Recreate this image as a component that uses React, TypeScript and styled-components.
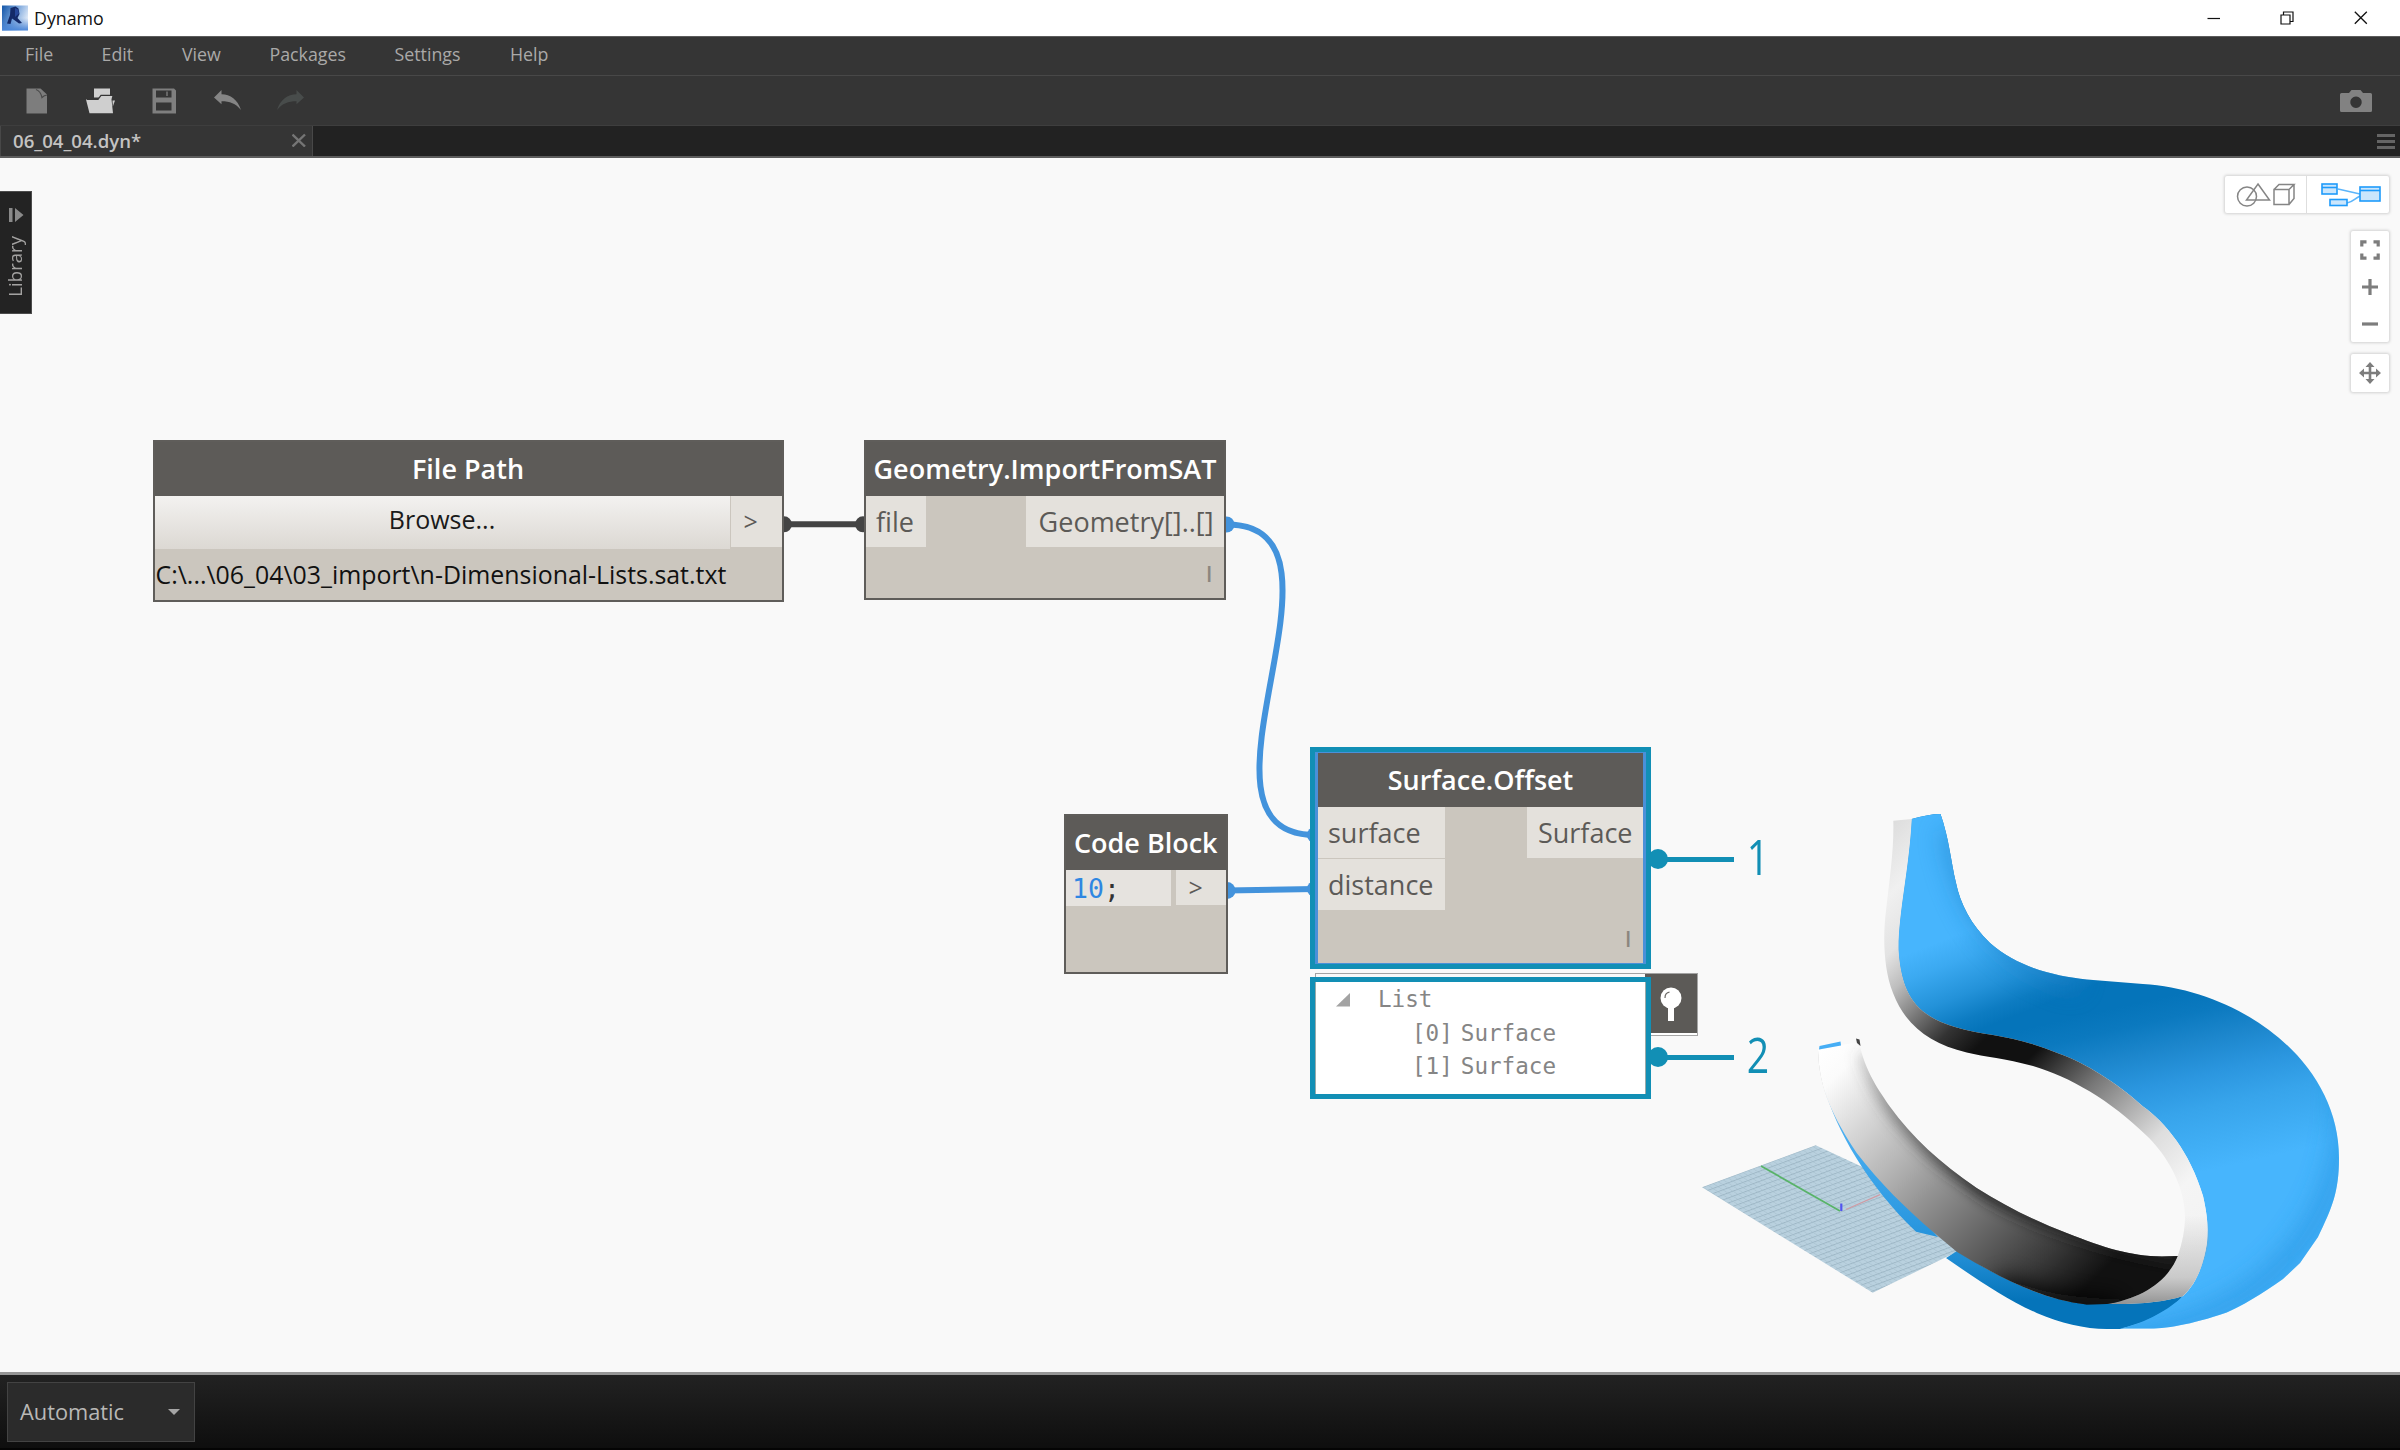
import React from "react";
import styled, { createGlobalStyle, css } from "styled-components";

const GlobalStyle = createGlobalStyle`
  html, body { margin: 0; padding: 0; }
  body { width: 2400px; height: 1450px; overflow: hidden; background: #f9f9f9; }
  * { box-sizing: border-box; }
`;

const teal = "#128fb5";
const wireBlue = "#4393dc";
const CANVAS_TOP = 158;

/* ---------- Window chrome ---------- */

const Window = styled.div`
  display: flex;
  flex-direction: column;
  width: 2400px;
  height: 1450px;
  overflow: hidden;
  font-family: "Open Sans", "Noto Sans", sans-serif;
`;

const TitleBar = styled.header`
  display: flex;
  align-items: center;
  height: 36px;
  flex: none;
  padding: 0 32px 0 2px;
  background: #fff;
  color: #111;
`;

const TitleText = styled.span`
  flex: 1;
  padding-left: 5px;
  font-size: 17.8px;
  line-height: 36px;
`;

const WindowButtons = styled.div`
  display: flex;
  align-items: center;
  gap: 60px;
  svg { display: block; }
`;

const MenuBar = styled.nav`
  display: flex;
  flex: none;
  height: 39px;
  padding-left: 25px;
  background: #353535;
  border-top: 1px solid #5c5c5c;
`;

const MenuItem = styled.span<{ $w: number }>`
  width: ${(p) => p.$w}px;
  font-size: 17.8px;
  line-height: 35px;
  color: #aaa9a8;
`;

const ToolBar = styled.div`
  display: flex;
  flex: none;
  align-items: center;
  justify-content: space-between;
  height: 50px;
  padding: 1px 27px 0 26px;
  background: #353535;
  border-top: 1px solid #484848;
`;

const ToolGroup = styled.div`
  display: flex;
  align-items: center;
  svg { display: block; }
`;

const ToolSlot = styled.div<{ $w: number }>`
  width: ${(p) => p.$w}px;
`;

const TabStrip = styled.div`
  display: flex;
  flex: none;
  justify-content: space-between;
  height: 33px;
  padding-right: 5px;
  background: #222;
  border-top: 1px solid #3e3e3e;
  border-bottom: 2px solid #5d5d5d;
`;

const Tab = styled.div`
  display: flex;
  align-items: center;
  justify-content: space-between;
  width: 313px;
  padding: 0 6px 2px 12px;
  background: #353535;
  border-left: 1px solid #484848;
  border-right: 1px solid #484848;
  color: #c4c3c2;
  font-size: 18.6px;
  font-weight: 600;
`;

const TabMenu = styled.div`
  display: flex;
  flex-direction: column;
  justify-content: center;
  gap: 3px;
  i { display: block; width: 18px; height: 3px; background: #656565; }
`;

const Footer = styled.footer`
  display: flex;
  flex: none;
  height: 78px;
  padding: 7px 7px;
  background: linear-gradient(#222, #0e0e0e);
  border-top: 3px solid #969696;
  border-bottom: 2px solid #040404;
`;

const RunMode = styled.div`
  display: flex;
  align-items: center;
  justify-content: space-between;
  width: 188px;
  height: 60px;
  padding: 0 14px 1px 12px;
  border: 1px solid #434343;
  background: #2b2b2b;
  color: #b9b8b6;
  font-size: 21.8px;
`;

const Caret = styled.span`
  border: 6.5px solid transparent;
  border-top: 6.5px solid #a5a5a5;
  border-bottom: 0;
`;

/* ---------- Workspace ---------- */

const Workspace = styled.main`
  position: relative;
  flex: 1;
  overflow: hidden;
  background: #f9f9f9;
`;

const Scene = styled.svg`
  position: absolute;
  inset: 0;
  display: block;
`;

const Placed = styled.div<{ $x: number; $y: number; $w: number; $h: number }>`
  position: absolute;
  left: ${(p) => p.$x}px;
  top: ${(p) => p.$y - CANVAS_TOP}px;
  width: ${(p) => p.$w}px;
  height: ${(p) => p.$h}px;
`;

const LibraryTab = styled(Placed)`
  display: flex;
  flex-direction: column;
  align-items: center;
  padding: 16px 0 0 1px;
  background: #232323;
  border: solid #4c4c4c;
  border-width: 1px 1px 1px 0;
  svg { display: block; flex: none; }
`;

const LibraryLabel = styled.span`
  margin: 14px 2px 0 0;
  writing-mode: vertical-rl;
  transform: rotate(180deg);
  color: #a3a2a1;
  font-size: 18.6px;
  line-height: 26px;
`;

const NodeBox = styled(Placed)`
  display: flex;
  flex-direction: column;
  background: #cbc6be;
  border: 2px solid #5f5d5a;
  color: #5c5a57;
  font-size: 27px;
`;

const NodeTitle = styled.div<{ $h: number }>`
  flex: none;
  height: ${(p) => p.$h}px;
  line-height: ${(p) => p.$h - 1}px;
  background: #5d5b58;
  color: #fff;
  text-align: center;
  font-weight: 600;
  white-space: nowrap;
`;

const PortArea = styled.div`
  display: flex;
  justify-content: space-between;
  align-items: flex-start;
`;

const PortColumn = styled.div`
  display: flex;
  flex-direction: column;
  gap: 1px;
`;

const Port = styled.div<{ $w: number; $h?: number; $side?: "in" | "out" | "mid" }>`
  width: ${(p) => p.$w}px;
  height: ${(p) => p.$h ?? 51}px;
  line-height: ${(p) => p.$h ?? 51}px;
  background: #e4e1dc;
  ${(p) =>
    p.$side === "out"
      ? css`text-align: right; padding-right: 10.5px;`
      : p.$side === "mid"
      ? css`padding-left: 13px; border-left: 1px solid #cbc6be; font-size: 25px;`
      : css`padding-left: 10px;`}
`;

const Lacing = styled.div`
  margin-top: auto;
  padding: 0 12px 10px 0;
  text-align: right;
  font-size: 21px;
  font-weight: 600;
  line-height: 28px;
  color: #8b867f;
`;

const BrowseButton = styled.div`
  flex: 1;
  height: 53px;
  line-height: 47px;
  text-align: center;
  color: #1a1a1a;
  font-size: 25px;
  background: linear-gradient(#f3f2f0, #dcd8d3);
`;

const PathText = styled.div`
  padding-left: 1px;
  line-height: 51px;
  font-size: 24.9px;
  color: #111;
  white-space: nowrap;
`;

const CodeField = styled.div`
  width: 107px;
  height: 36px;
  padding-left: 6px;
  border-right: 2px solid #cbc6be;
  background: #e6e3df;
  color: #333;
  font: 26.5px/37px "DejaVu Sans Mono", "Liberation Mono", monospace;
  b { font-weight: 400; color: #2f87e2; }
`;

const Frame = styled(Placed)`
  border: 5px solid ${teal};
`;

const SelectedInner = styled.div`
  height: 100%;
  display: flex;
  flex-direction: column;
  border: solid #4a90d9;
  border-width: 1px 3px 1px 3px;
  background: #cbc6be;
  color: #5c5a57;
  font-size: 27px;
`;

const PreviewBox = styled(Placed)`
  display: flex;
  justify-content: flex-end;
  align-items: flex-start;
  border-top: 1px solid #a3a3a3;
  border-left: 1px solid #a3a3a3;
`;

const PinButton = styled.div`
  display: flex;
  justify-content: center;
  align-items: flex-start;
  width: 53px;
  height: 62px;
  padding-top: 13px;
  background: #5c5a57;
  border: solid #a6a6a6;
  border-width: 0 1px 1px 0;
  box-shadow: inset 0 -2px 0 #fff;
`;

const Tree = styled.div`
  height: 100%;
  padding: 1px 0 0 66px;
  background: #fff;
  box-shadow: inset 1px 0 0 #9aa, inset -1px 0 0 #9aa;
  color: #858585;
  font: 22.6px/33.5px "DejaVu Sans Mono", "Liberation Mono", monospace;
`;

const TreeRow = styled.div<{ $child?: boolean }>`
  display: flex;
  gap: 8px;
  height: 33.5px;
  padding-left: ${(p) => (p.$child ? 31 : 0)}px;
  margin-left: ${(p) => (p.$child ? 0 : -45)}px;
  align-items: center;
`;

const Expander = styled.svg`
  display: block;
  margin-right: 10px;
`;

const Callout = styled(Placed)`
  display: flex;
  align-items: center;
  color: ${teal};
`;

const CalloutDot = styled.i`
  width: 20px;
  height: 20px;
  border-radius: 50%;
  background: ${teal};
`;

const CalloutLine = styled.i`
  width: 67px;
  height: 5px;
  margin-left: -1px;
  background: ${teal};
`;

const CalloutNumber = styled.span`
  margin: -6px 0 0 10px;
  width: 28px;
  font: 400 49px/50px "Open Sans", sans-serif;
  transform: scaleX(0.8);
`;

/* ---------- View controls ---------- */

const ViewControls = styled.div`
  position: absolute;
  top: 18px;
  right: 11px;
  display: flex;
  flex-direction: column;
  align-items: flex-end;
`;

const Panel = styled.div<{ $col?: boolean; $mt?: number }>`
  display: flex;
  flex-direction: ${(p) => (p.$col ? "column" : "row")};
  margin-top: ${(p) => p.$mt ?? 0}px;
  background: #fff;
  border-radius: 2px;
  box-shadow: 0 0 3px 1px rgba(0, 0, 0, 0.16);
`;

const PanelCell = styled.div<{ $w: number; $h: number; $split?: boolean; $inset?: number }>`
  display: flex;
  align-items: center;
  justify-content: center;
  width: ${(p) => p.$w}px;
  height: ${(p) => p.$h}px;
  padding-left: ${(p) => p.$inset ?? 0}px;
  border-right: ${(p) => (p.$split ? "1px solid #dedede" : "0")};
  svg { display: block; }
`;

/* ---------- Drawings ---------- */

const Logo = () => (
  <svg width="27" height="26" viewBox="0 0 27 26">
    <defs>
      <linearGradient id="lg" x1="0" y1="0.2" x2="1" y2="0.6">
        <stop offset="0" stopColor="#1f5fae" />
        <stop offset="0.5" stopColor="#7ba6dc" />
        <stop offset="1" stopColor="#e8f0fa" />
      </linearGradient>
      <linearGradient id="lg2" x1="0" y1="0" x2="0" y2="1">
        <stop offset="0.5" stopColor="#3a78cc" stopOpacity="0" />
        <stop offset="1" stopColor="#4a86d8" />
      </linearGradient>
    </defs>
    <rect y="0.500" width="26" height="25" fill="url(#lg)" />
    <rect y="0.500" width="26" height="25" fill="url(#lg2)" />
    <path d="M8.500 3l5-1.500 3 2 1 5.500-2 4 4.500 5-3 0.500-5.500-4-1.500-1-1.500 5.500-3.500-0.500 3-8.500z" fill="#142a68" />
    <path d="M13 3l3 1.500 1 4-4 3.500z" fill="#27489a" />
  </svg>
);

const WinIcons = () => (
  <WindowButtons>
    <svg width="14" height="14"><path d="M1.500 7.500h12.500" stroke="#111" strokeWidth="1.200" /></svg>
    <svg width="14" height="14" fill="none" stroke="#111" strokeWidth="1.200">
      <path d="M1 4h9v9h-9zM3.500 3.500v-2.500h9.500v9.500h-2.500" />
    </svg>
    <svg width="14" height="14"><path d="M0.800 0.800l12 12M12.800 0.800l-12 12" stroke="#111" strokeWidth="1.300" /></svg>
  </WindowButtons>
);

const NewIcon = () => (
  <svg width="22" height="26" viewBox="0 0 22 26">
    <path d="M0.500 0.500h14l6.500 6v19h-20.500z" fill="#7d7d7d" />
    <path d="M10 1.500c3 1 5 3.500 6 8 1.500-1.500 3-2.300 5-2.500" fill="none" stroke="#4a4a4a" strokeWidth="1.200" />
  </svg>
);

const OpenIcon = () => (
  <svg width="30" height="26" viewBox="0 0 30 26">
    <path d="M8 0.500h16v9h-16z" fill="#cfcfcf" />
    <path d="M0 11.500h12l3-4.200h11.500l-1 4 1.500 14h-23.500z" fill="#cfcfcf" />
    <path d="M1 11.300h11l3-4h12" fill="none" stroke="#353535" strokeWidth="1.200" />
    <path d="M26.500 12.500h2.500l-2.200 6z" fill="#cfcfcf" />
  </svg>
);

const SaveIcon = () => (
  <svg width="25" height="26" viewBox="0 0 25 26">
    <path fillRule="evenodd" fill="#7f7f7f" d="M0.500 0.500h21.500l2 2v23h-23.500zM4 2.500v7h15.500v-7zM4 14.500v8h15.500v-8z" />
    <path d="M15 3.500v4.500" stroke="#666" strokeWidth="2" />
  </svg>
);

const ArrowIcon = ({ flip, color }: { flip?: boolean; color: string }) => (
  <svg width="28" height="22" viewBox="0 0 28 22">
    <path
      transform={flip ? "matrix(-1 0 0 1 28 0)" : undefined}
      d="M0 7.500l7.500-7.500v4.200c9 0.300 16 5 19.500 15.800-5.500-6.500-11-8.700-19.500-8.700v3z"
      fill={color}
    />
  </svg>
);

const CameraIcon = () => (
  <svg width="34" height="24" viewBox="0 0 34 24">
    <path
      fillRule="evenodd"
      fill="#828282"
      d="M2.500 4h7.500l2.500-3h9l2.500 3h7.500q1.500 0 1.500 1.500v16q0 1.500-1.500 1.500h-29q-1.500 0-1.500-1.500v-16q0-1.500 1.500-1.500zM17 7.500a5.700 5.700 0 1 0 .01 0z"
    />
  </svg>
);

const GeometryIcon = () => (
  <svg width="60" height="26" viewBox="0 0 60 26" fill="none" stroke="#858585" strokeWidth="1.500">
    <circle cx="11" cy="14.500" r="9.500" />
    <path d="M22 2l11.500 16h-23z" />
    <path d="M38 7.500h15v15h-15zM38 7.500l5-5h15l-5 5M58 2.500v14l-5 6" />
  </svg>
);

const GraphIcon = () => (
  <svg width="60" height="24" viewBox="0 0 60 24" stroke="#1e9bfa" strokeWidth="1.600" fill="#cbe6fc">
    <path d="M17 6l22 5M26 20c6-1 7-4 13-7" fill="none" stroke="#5cb5fa" />
    <rect x="1" y="1" width="15" height="10" />
    <path d="M1 4.500h15" />
    <rect x="9" y="16.500" width="17" height="6" />
    <rect x="39" y="4" width="20" height="14" />
    <path d="M39 7.500h20" />
  </svg>
);

const FitIcon = () => (
  <svg width="20" height="20" viewBox="0 0 20 20" fill="none" stroke="#7d7d7d" strokeWidth="3.200">
    <path d="M1.800 6.500v-4.700h4.700M13.500 1.800h4.700v4.700M18.200 13.500v4.700h-4.700M6.500 18.200h-4.700v-4.700" />
  </svg>
);

const PanIcon = () => (
  <svg width="22" height="22" viewBox="0 0 22 22">
    <path d="M11 3v16M3 11h16" stroke="#7d7d7d" strokeWidth="2.600" />
    <path d="M11 0l4.500 5h-9zM11 22l4.500-5h-9zM0 11l5-4.500v9zM22 11l-5-4.500v9z" fill="#7d7d7d" />
  </svg>
);

const PinIcon = () => (
  <svg width="24" height="36" viewBox="0 0 24 36">
    <circle cx="12" cy="11" r="10.500" fill="#fff" />
    <path d="M9 19h6v15h-6z" fill="#fff" />
    <path d="M6 11c0-3.500 2-5.500 4.500-5.800" fill="none" stroke="#6b6966" strokeWidth="1.200" />
  </svg>
);

const bluePath =
  "M1911.700 819C1922 816 1932 814 1940.500 814C1949 838 1951 862 1956 883C1960 903 1971 925 1990 943C2020 969 2057 976 2087 979.400L2143 984C2240 990 2339 1060 2339 1158C2339 1192 2332 1208 2318 1237L2300 1263L2283 1279C2262 1294 2240 1307 2226.700 1312.400C2190 1325 2165 1328.600 2146.700 1328.600L2120 1328.600C2146 1323 2170 1309 2183 1296C2198 1282 2204 1262 2207 1242.500C2208 1228 2208 1218 2203 1196C2190 1152 2165 1122 2143 1106.500C2116 1082 2085 1063 2060 1054C2030 1042 2015 1039 1993 1035C1965 1031 1940 1024 1926.700 1014C1906 1000 1900 975 1898.500 950C1898 915 1909 870 1911.700 819Z";

const rimPath =
  "M1893.300 820.700L1911.700 819C1909 870 1898 915 1898.500 950C1900 975 1906 1000 1926.700 1014C1940 1024 1965 1031 1993 1035C2015 1039 2030 1042 2060 1054C2085 1063 2116 1082 2143 1106.500C2165 1122 2190 1152 2203 1196C2208 1218 2208 1228 2207 1242.500C2204 1262 2198 1282 2183 1296C2165 1302 2140 1304.500 2106.700 1304C2140 1299 2167 1283 2177.700 1256C2182 1244 2185 1230 2185 1216.700C2185 1180 2160 1148 2146.700 1135.700C2110 1100 2070 1077 2033 1066C2005 1058 1985 1057 1966.700 1052.400C1930 1044 1905 1025 1893 993C1883 968 1883 935 1886 911C1890 875 1894 850 1893.300 820.700Z";

const bandPath =
  "M1818 1050L1841 1045L1856.700 1042.700L1859 1042C1865 1072 1880 1092 1890 1106.700C1912 1137 1940 1163 1976.700 1188C2005 1206 2035 1221 2066.700 1233C2105 1248 2130 1256 2162 1256.500L2177.700 1256C2167 1283 2140 1299 2106.700 1304L2086.700 1304.500C2045 1300 2005 1281 1956.700 1251.700L1936.700 1235C1905 1208 1880 1183 1856.700 1153C1834 1118 1819 1090 1818 1050Z";

const Geometry = () => (
  <g>
    <defs>
      <pattern id="grid" width="5" height="5" patternUnits="userSpaceOnUse" patternTransform="matrix(1 -0.370 1 0.640 1702 1187)">
        <rect width="5" height="5" fill="#b9d1df" />
        <path d="M0 0.500h5" stroke="#9cb6c5" strokeWidth="0.900" />
        <path d="M0.500 0v5" stroke="#a6c0ce" strokeWidth="0.600" />
      </pattern>
      <linearGradient id="rim" gradientUnits="userSpaceOnUse" x1="1355" y1="1355" x2="1725" y2="1725">
        <stop offset="0" stopColor="#dcdcdc" />
        <stop offset="0.100" stopColor="#f0f0f0" />
        <stop offset="0.180" stopColor="#e3e3e3" />
        <stop offset="0.235" stopColor="#bdbdbd" />
        <stop offset="0.300" stopColor="#777" />
        <stop offset="0.365" stopColor="#333" />
        <stop offset="0.425" stopColor="#111" />
        <stop offset="0.510" stopColor="#111" />
        <stop offset="0.570" stopColor="#444" />
        <stop offset="0.630" stopColor="#777" />
        <stop offset="0.710" stopColor="#acacac" />
        <stop offset="0.790" stopColor="#dedede" />
        <stop offset="0.890" stopColor="#f5f5f5" />
        <stop offset="1" stopColor="#f2f2f2" />
      </linearGradient>
      <linearGradient id="rimLow" gradientUnits="userSpaceOnUse" x1="0" y1="1215" x2="0" y2="1304">
        <stop offset="0" stopColor="#999" stopOpacity="0" />
        <stop offset="0.700" stopColor="#999" stopOpacity="0.450" />
        <stop offset="1" stopColor="#888" stopOpacity="0.900" />
      </linearGradient>
      <linearGradient id="band" gradientUnits="userSpaceOnUse" x1="1435" y1="1435" x2="1700" y2="1700">
        <stop offset="0" stopColor="#fff" />
        <stop offset="0.080" stopColor="#fbfbfb" />
        <stop offset="0.190" stopColor="#dedede" />
        <stop offset="0.370" stopColor="#b2b2b2" />
        <stop offset="0.500" stopColor="#8d8d8d" />
        <stop offset="0.670" stopColor="#606060" />
        <stop offset="0.820" stopColor="#383838" />
        <stop offset="0.950" stopColor="#111" />
      </linearGradient>
      <linearGradient id="bandEdge" gradientUnits="userSpaceOnUse" x1="1862" y1="1060" x2="1975" y2="1185">
        <stop offset="0" stopColor="#555" stopOpacity="0.250" />
        <stop offset="0.400" stopColor="#444" stopOpacity="0.600" />
        <stop offset="1" stopColor="#222" stopOpacity="0.950" />
      </linearGradient>
      <linearGradient id="skin" gradientUnits="userSpaceOnUse" x1="2093" y1="1013" x2="2133" y2="1188">
        <stop offset="0" stopColor="#0574ba" />
        <stop offset="0.120" stopColor="#0b79bf" />
        <stop offset="0.280" stopColor="#1c86cc" />
        <stop offset="0.470" stopColor="#2b96df" />
        <stop offset="0.650" stopColor="#37a4eb" />
        <stop offset="0.850" stopColor="#40aef5" />
        <stop offset="1.000" stopColor="#47b5fd" />
      </linearGradient>
      <linearGradient id="neck" gradientUnits="userSpaceOnUse" x1="2030" y1="1010" x2="1995" y2="920">
        <stop offset="0" stopColor="#47b5fd" stopOpacity="0" />
        <stop offset="0.150" stopColor="#47b5fd" stopOpacity="0.120" />
        <stop offset="0.400" stopColor="#47b5fd" stopOpacity="0.460" />
        <stop offset="0.750" stopColor="#47b5fd" stopOpacity="0.820" />
        <stop offset="1" stopColor="#47b5fd" />
      </linearGradient>
      <linearGradient id="sliver" gradientUnits="userSpaceOnUse" x1="0" y1="1080" x2="0" y2="1300">
        <stop offset="0" stopColor="#5cbcfb" />
        <stop offset="0.650" stopColor="#2b98e0" />
        <stop offset="0.820" stopColor="#1f8cd3" />
        <stop offset="1" stopColor="#0574ba" />
      </linearGradient>
      <clipPath id="clipBlue"><path d={bluePath} /></clipPath>
      <clipPath id="clipBand"><path d={bandPath} /></clipPath>
      <filter id="b7" filterUnits="userSpaceOnUse" x="1600" y="700" width="900" height="750"><feGaussianBlur stdDeviation="7" /></filter>
      <filter id="b12" filterUnits="userSpaceOnUse" x="1600" y="700" width="900" height="750"><feGaussianBlur stdDeviation="12" /></filter>
    </defs>

    <path d="M1702 1187.300L1815.700 1145.300L2000 1231L1872.700 1292.700Z" fill="url(#grid)" />
    <path d="M1761 1166L1840 1211" stroke="#58b368" strokeWidth="1.800" />
    <path d="M1846 1209.500L1880 1194.700" stroke="#cf9ca5" strokeWidth="1.300" />
    <path d="M1841.300 1203.500v7.500" stroke="#5355f0" strokeWidth="2.200" />

    <path d="M1824 1086.700C1836 1130 1868 1186 1916 1231.700L1938 1237L1860 1150Z" fill="url(#sliver)" />
    <path
      d="M1946 1258L1957 1251C2005 1281 2045 1300 2086.700 1304L2183 1296C2170 1312 2146 1323 2120 1329H2106.700C2085 1329 2060 1323 2036.700 1313C2005 1299 1975 1278 1946 1258Z"
      fill="url(#sliver)"
    />

    <path d={bluePath} fill="url(#skin)" />
    <path d={bluePath} fill="url(#neck)" />
    <g clipPath="url(#clipBlue)" fill="none">
      <path d="M1952 830C1962 890 1985 955 2080 982" stroke="#1a7fc5" strokeWidth="22" filter="url(#b12)" opacity="0.550" />
      <path d="M2346 1080C2358 1220 2260 1330 2110 1336" stroke="#2b97e2" strokeWidth="20" filter="url(#b12)" opacity="0.800" />
    </g>

    <path d={rimPath} fill="url(#rim)" />
    <path d="M2185 1216H2209V1242C2204 1262 2198 1282 2183 1296C2165 1302 2140 1304.500 2106.700 1304C2140 1299 2167 1283 2177.700 1256C2182 1244 2185 1230 2185 1216.700Z" fill="url(#rimLow)" />

    <path d={bandPath} fill="url(#band)" />
    <g clipPath="url(#clipBand)" fill="none">
      <path d="M1864 1052C1876 1085 1890 1105 1905 1121C1940 1160 1960 1172 1985 1190C2015 1209 2080 1238 2180 1256" stroke="url(#bandEdge)" strokeWidth="16" filter="url(#b7)" />
      <path d="M1995 1293C2035 1308 2060 1314 2120 1316" stroke="#080808" strokeWidth="34" filter="url(#b12)" />
      <path d="M1816 1050C1817 1090 1830 1115 1850 1148" stroke="#aaa" strokeWidth="4" opacity="0.600" />
    </g>
    <path d="M1819 1049.500L1819.500 1046L1840.500 1041.500L1841 1045.500Z" fill="#46aef5" />
    <path d="M1856 1038.500L1859.500 1039.500L1860.500 1046L1857 1043Z" fill="#444" />
  </g>
);

const Wires = () => (
  <g fill="none">
    <path d="M784 524.300H864" stroke="#444" strokeWidth="6" />
    <circle cx="784" cy="524.300" r="8" fill="#444" />
    <circle cx="863" cy="524.300" r="8" fill="#444" />
    <g stroke={wireBlue} strokeWidth="6">
      <path d="M1227 524.500C1372 524.500 1170 835 1315 835" />
      <path d="M1227 890.500L1315 889" />
    </g>
    <g fill={wireBlue}>
      <circle cx="1226.500" cy="524.500" r="8" />
      <circle cx="1227" cy="890.500" r="8.500" />
      <circle cx="1315" cy="835" r="8" />
      <circle cx="1315" cy="889" r="8" />
    </g>
  </g>
);

const menu: [string, number][] = [
  ["File", 76.5],
  ["Edit", 80.5],
  ["View", 87.5],
  ["Packages", 125],
  ["Settings", 115.5],
  ["Help", 60],
];

export default function App() {
  return (
    <Window>
      <GlobalStyle />
      <TitleBar>
        <Logo />
        <TitleText>Dynamo</TitleText>
        <WinIcons />
      </TitleBar>
      <MenuBar>
        {menu.map(([label, w]) => (
          <MenuItem key={label} $w={w}>{label}</MenuItem>
        ))}
      </MenuBar>
      <ToolBar>
        <ToolGroup>
          <ToolSlot $w={60}><NewIcon /></ToolSlot>
          <ToolSlot $w={66}><OpenIcon /></ToolSlot>
          <ToolSlot $w={62}><SaveIcon /></ToolSlot>
          <ToolSlot $w={62}><ArrowIcon color="#858585" /></ToolSlot>
          <ToolSlot $w={28}><ArrowIcon flip color="#484c4b" /></ToolSlot>
        </ToolGroup>
        <CameraIcon />
      </ToolBar>
      <TabStrip>
        <Tab>
          06_04_04.dyn*
          <svg width="14" height="14"><path d="M0.500 1.500l12.500 12M13 1.500l-12.500 12" stroke="#757575" strokeWidth="2.400" /></svg>
        </Tab>
        <TabMenu><i /><i /><i /></TabMenu>
      </TabStrip>

      <Workspace>
        <Scene width="2400" height="1214" viewBox={`0 ${CANVAS_TOP} 2400 1214`}>
          <Geometry />
          <Wires />
        </Scene>

        <LibraryTab $x={0} $y={191} $w={32} $h={123}>
          <svg width="15" height="14"><path d="M0 0h3.500v14h-3.500zM6 0l8.500 7-8.500 7z" fill="#8a8a8a" /></svg>
          <LibraryLabel>Library</LibraryLabel>
        </LibraryTab>

        <NodeBox $x={152.5} $y={440} $w={631} $h={162}>
          <NodeTitle $h={54}>File Path</NodeTitle>
          <PortArea>
            <BrowseButton>Browse...</BrowseButton>
            <Port $w={52} $side="mid">&gt;</Port>
          </PortArea>
          <PathText>C:\...\06_04\03_import\n-Dimensional-Lists.sat.txt</PathText>
        </NodeBox>

        <NodeBox $x={864} $y={440} $w={362} $h={160}>
          <NodeTitle $h={54}>Geometry.ImportFromSAT</NodeTitle>
          <PortArea>
            <Port $w={60}>file</Port>
            <Port $w={198} $side="out">Geometry[]..[]</Port>
          </PortArea>
          <Lacing>l</Lacing>
        </NodeBox>

        <NodeBox $x={1064} $y={813.5} $w={163.5} $h={160}>
          <NodeTitle $h={54.5}>Code Block</NodeTitle>
          <PortArea>
            <CodeField><b>10</b>;</CodeField>
            <Port $w={51} $h={35} $side="mid">&gt;</Port>
          </PortArea>
        </NodeBox>

        <PreviewBox $x={1315} $y={973} $w={383} $h={110}>
          <PinButton><PinIcon /></PinButton>
        </PreviewBox>

        <Frame $x={1310} $y={747} $w={341} $h={221.5}>
          <SelectedInner>
            <NodeTitle $h={54}>Surface.Offset</NodeTitle>
            <PortArea>
              <PortColumn>
                <Port $w={127}>surface</Port>
                <Port $w={127}>distance</Port>
              </PortColumn>
              <Port $w={116} $side="out">Surface</Port>
            </PortArea>
            <Lacing>l</Lacing>
          </SelectedInner>
        </Frame>

        <Frame $x={1310} $y={977} $w={341} $h={122}>
          <Tree>
            <TreeRow>
              <Expander width="24" height="14"><path d="M0 13.500L14 0v13.500z" fill="#a3a3a3" /></Expander>
              <span>List</span>
            </TreeRow>
            <TreeRow $child><span>[0]</span><span>Surface</span></TreeRow>
            <TreeRow $child><span>[1]</span><span>Surface</span></TreeRow>
          </Tree>
        </Frame>

        <Callout $x={1648} $y={834} $w={150} $h={50}>
          <CalloutDot /><CalloutLine /><CalloutNumber>1</CalloutNumber>
        </Callout>
        <Callout $x={1648} $y={1032} $w={150} $h={50}>
          <CalloutDot /><CalloutLine /><CalloutNumber>2</CalloutNumber>
        </Callout>

        <ViewControls>
          <Panel>
            <PanelCell $w={82} $h={37} $split><GeometryIcon /></PanelCell>
            <PanelCell $w={82} $h={37} $inset={5}><GraphIcon /></PanelCell>
          </Panel>
          <Panel $col $mt={18}>
            <PanelCell $w={38} $h={38}><FitIcon /></PanelCell>
            <PanelCell $w={38} $h={36}><svg width="16" height="16"><path d="M8 0v16M0 8h16" stroke="#7d7d7d" strokeWidth="3.200" /></svg></PanelCell>
            <PanelCell $w={38} $h={37}><svg width="16" height="4"><path d="M0 2h16" stroke="#7d7d7d" strokeWidth="3.200" /></svg></PanelCell>
          </Panel>
          <Panel $mt={12}>
            <PanelCell $w={38} $h={38}><PanIcon /></PanelCell>
          </Panel>
        </ViewControls>
      </Workspace>

      <Footer>
        <RunMode>Automatic<Caret /></RunMode>
      </Footer>
    </Window>
  );
}
